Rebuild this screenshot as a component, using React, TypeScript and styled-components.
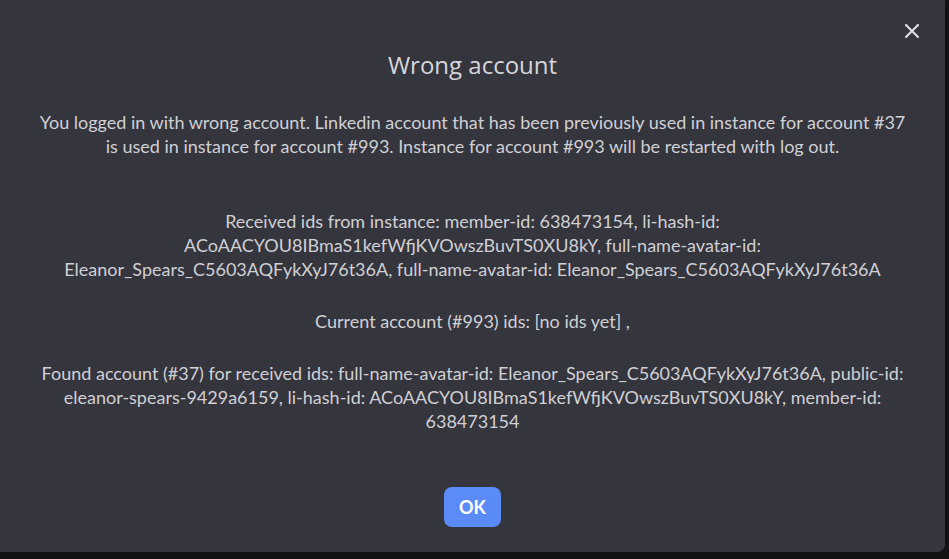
import { createGlobalStyle, styled } from "styled-components";

const GlobalStyle = createGlobalStyle`
  html, body {
    margin: 0;
    padding: 0;
    background: #121215;
    overflow: hidden;
  }
  #root {
    width: 949px;
    height: 559px;
  }
`;

const Backdrop = styled.div`
  width: 949px;
  height: 559px;
  background: #121215;
  overflow: hidden;
`;

const Modal = styled.div`
  width: 951px;
  height: 558px;
  margin: -6px 0 0 -6px;
  background: #35353e;
  border-radius: 8px;
  box-sizing: border-box;
  padding: 55px 37px 0 43px;
  display: flex;
  flex-direction: column;
  align-items: center;
  color: #d0d0d4;
  font-family: Lato, "Open Sans", sans-serif;
  position: relative;
`;

const CloseButton = styled.button`
  position: absolute;
  top: 26px;
  right: 22px;
  width: 22px;
  height: 22px;
  padding: 0;
  border: none;
  background: transparent;
  color: #dcdce0;
  cursor: pointer;
  display: flex;
  align-items: center;
  justify-content: center;
`;

const Title = styled.h2`
  margin: 0;
  font-family: "Open Sans", Lato, sans-serif;
  font-weight: 400;
  font-size: 24px;
  line-height: 32px;
  color: #d6d6da;
`;

const Body = styled.div`
  margin-top: 29px;
  width: 100%;
  display: flex;
  flex-direction: column;
  gap: 28px;
`;

const Para = styled.p<{ $extra?: number }>`
  margin: 0 0 ${(p) => p.$extra ?? 0}px;
  text-align: center;
  font-size: 18px;
  line-height: 24px;
`;

const OkButton = styled.button`
  margin-top: 54px;
  width: 57px;
  height: 40px;
  border: none;
  border-radius: 8px;
  background: #5b8bf6;
  color: #ffffff;
  font-family: Lato, sans-serif;
  font-weight: 700;
  font-size: 18px;
  cursor: pointer;
`;

export default function App() {
  return (
    <>
      <GlobalStyle />
      <Backdrop>
        <Modal>
          <CloseButton aria-label="Close">
            <svg width="14" height="14" viewBox="0 0 14 14">
              <path d="M1 1L13 13M13 1L1 13" stroke="currentColor" strokeWidth="2.2" strokeLinecap="round" />
            </svg>
          </CloseButton>
          <Title>Wrong account</Title>
          <Body>
            <Para $extra={23}>
              You logged in with wrong account. Linkedin account that has been previously used in instance for account #37 is used in instance for account #993. Instance for account #993 will be restarted with log out.
            </Para>
            <Para>
              Received ids from instance: member-id: 638473154, li-hash-id: ACoAACYOU8IBmaS1kefWfjKVOwszBuvTS0XU8kY, full-name-avatar-id: Eleanor_Spears_C5603AQFykXyJ76t36A, full-name-avatar-id: Eleanor_Spears_C5603AQFykXyJ76t36A
            </Para>
            <Para>Current account (#993) ids: [no ids yet] ,</Para>
            <Para>
              Found account (#37) for received ids: full-name-avatar-id: Eleanor_Spears_C5603AQFykXyJ76t36A, public-id: eleanor-spears-9429a6159, li-hash-id: ACoAACYOU8IBmaS1kefWfjKVOwszBuvTS0XU8kY, member-id: 638473154
            </Para>
          </Body>
          <OkButton>OK</OkButton>
        </Modal>
      </Backdrop>
    </>
  );
}
